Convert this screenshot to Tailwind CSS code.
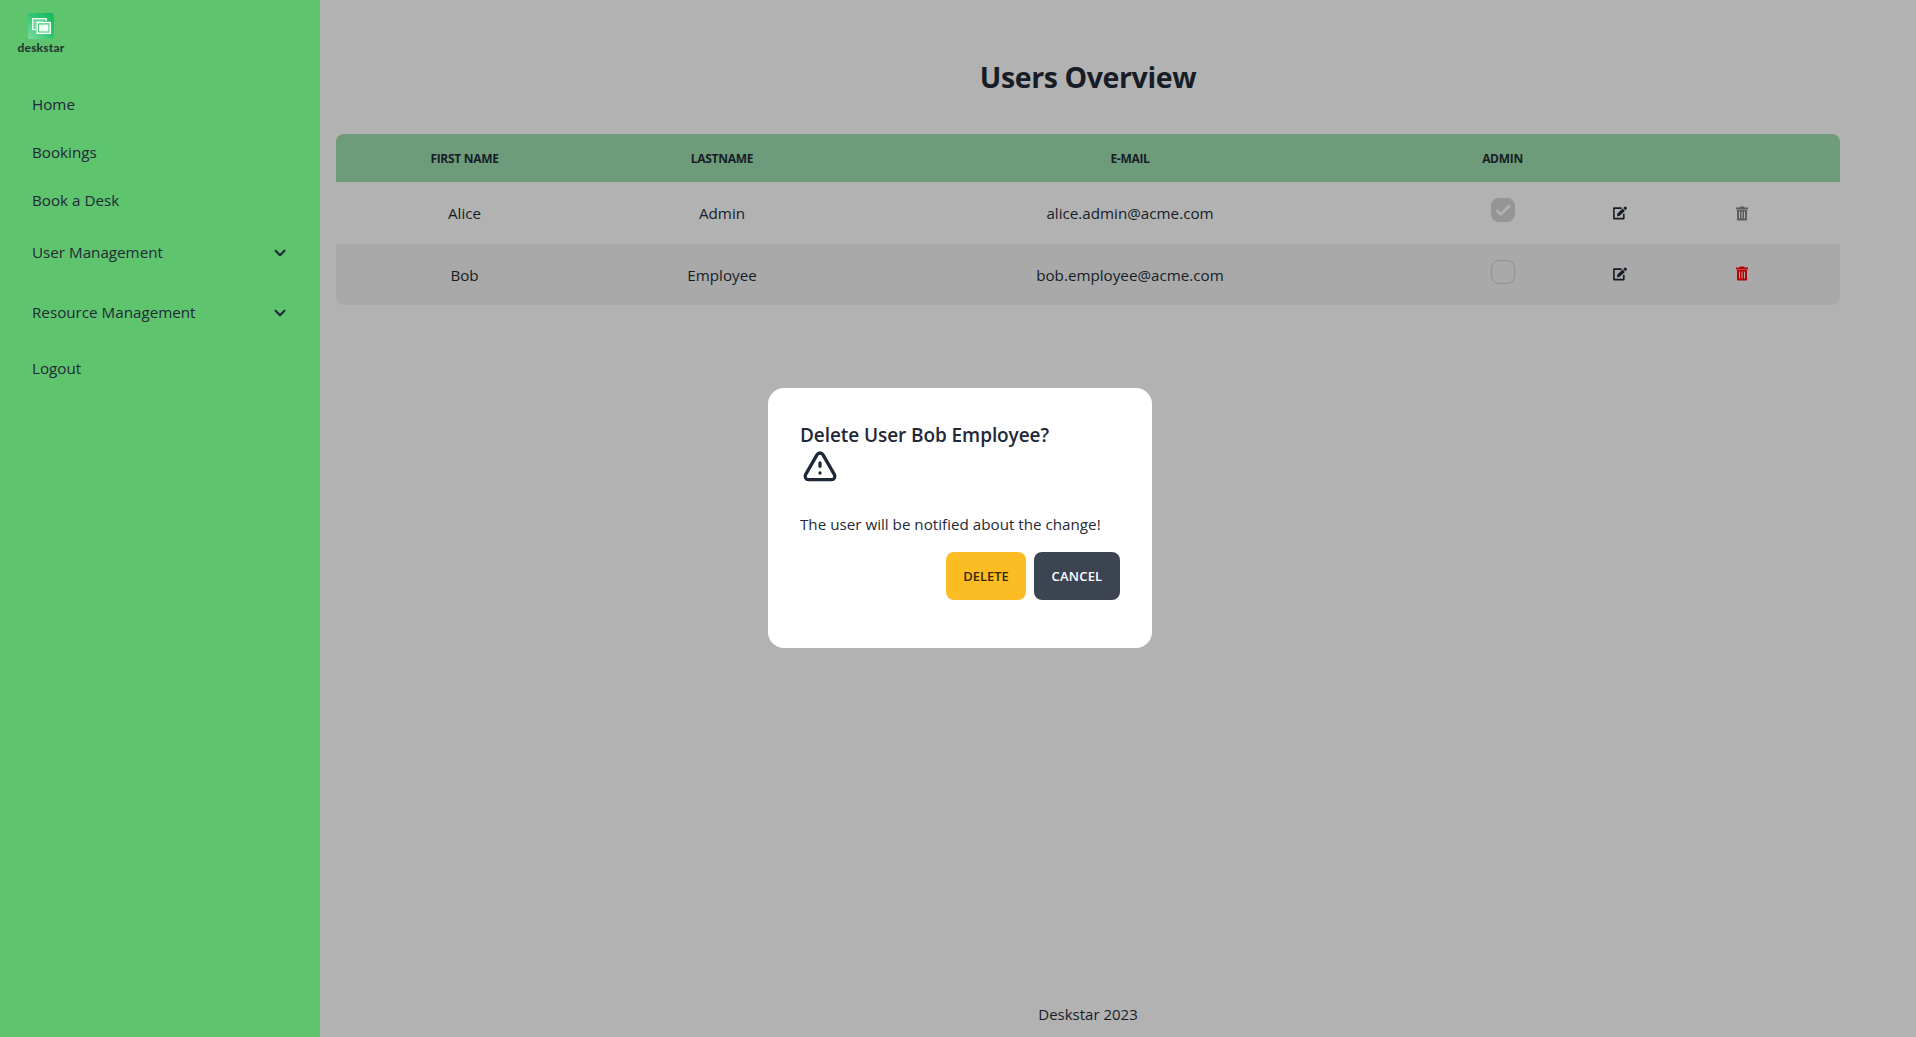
<!DOCTYPE html>
<html lang="en">
<head>
<meta charset="utf-8">
<title>Deskstar</title>
<script src="https://cdn.jsdelivr.net/npm/@tailwindcss/browser@4"></script>
</head>
<body class="h-screen overflow-hidden bg-[#b2b2b2] font-['Open_Sans','Noto_Sans',sans-serif] text-[15.2px] leading-6 text-[#1f2937]">
<svg class="hidden">
  <symbol id="edit" viewBox="0 0 14 14"><path d="M8.6 2.1H.9v10.5h9.9V7.8" fill="none" stroke="currentColor" stroke-width="1.6" stroke-linejoin="round"/><path d="M4.4 7.6l5.2-5 2.3 2.3-5.2 4.9-2.7.6zM10.2 2l1.4-1.3q.6-.5 1.2 0l.9.9q.5.6 0 1.2l-1.2 1.4z" fill="currentColor"/></symbol>
  <symbol id="trash" viewBox="0 0 12 15"><path d="M0 1.5h3.7V.6h4.6v.9H12v1.9H0z" fill="currentColor"/><path d="M1 4h10v9.500q0 .9-.9.9H1.900q-.9 0-.9-.9zM3 5.400v7.200h1V5.400zm2.500 0v7.200h1V5.400zm2.500 0v7.200h1V5.400z" fill="currentColor" fill-rule="evenodd"/></symbol>
  <symbol id="chevron" viewBox="0 0 20 20"><path fill="currentColor" fill-rule="evenodd" d="M5.293 7.293a1 1 0 011.414 0L10 10.586l3.293-3.293a1 1 0 111.414 1.414l-4 4a1 1 0 01-1.414 0l-4-4a1 1 0 010-1.414z"/></symbol>
</svg>
<div class="flex h-full">
  <aside class="flex h-full w-80 shrink-0 flex-col bg-[#5fc46e]">
    <div class="flex h-20 w-[82px] flex-col items-center pt-[13px]">
      <svg class="h-[26px] w-[26px] shrink-0" viewBox="0 0 26 26">
        <defs><linearGradient id="lg" x1="0" y1="1" x2="1" y2="0"><stop offset="0" stop-color="#7fdca0"/><stop offset=".5" stop-color="#35c675"/><stop offset="1" stop-color="#12b85c"/></linearGradient></defs>
        <rect width="26" height="26" rx="2" fill="url(#lg)"/>
        <path d="M8 16.500H4.700V5.700h13.500V8" fill="none" stroke="#eafbf0" stroke-width="1.500"/>
        <path d="M8 14H7V8h9" fill="none" stroke="#b9efcd" stroke-width="1"/>
        <rect x="9.200" y="9.500" width="13" height="10.800" fill="#43c97c" stroke="#fff" stroke-width="1.500"/>
        <rect x="11" y="11.500" width="9.500" height="7" fill="#f2fdf6"/>
      </svg>
      <span class="font-['Lato',sans-serif] text-[12px] leading-[18px] font-black tracking-[0.15px] text-[#263a30]">deskstar</span>
    </div>
    <nav class="flex flex-col px-8">
      <a class="flex h-12 items-center">Home</a>
      <a class="flex h-12 items-center">Bookings</a>
      <a class="flex h-12 items-center">Book a Desk</a>
      <a class="flex h-[58px] items-center justify-between"><span class="pb-0.5">User Management</span><svg class="-mr-[3px] size-[22px]"><use href="#chevron"/></svg></a>
      <a class="flex h-[62px] items-center justify-between"><span class="pb-0.5">Resource Management</span><svg class="-mr-[3px] size-[22px]"><use href="#chevron"/></svg></a>
      <a class="flex h-12 items-center">Logout</a>
    </nav>
  </aside>
  <main class="flex h-full w-[1536px] flex-col px-4 text-[#161d27]">
    <h1 class="mt-[57px] mb-[37px] text-center text-[28.5px] leading-10 font-bold tracking-[-0.4px]">Users Overview</h1>
    <div class="overflow-hidden rounded-lg text-center">
      <div class="grid h-12 grid-cols-[257px_258px_558px_187px_48px_196px] items-center bg-[#6e9b7a] pt-px text-[12px] font-bold tracking-[-0.3px]">
        <span>FIRST NAME</span><span>LASTNAME</span><span>E-MAIL</span><span>ADMIN</span>
      </div>
      <div class="grid h-[62px] grid-cols-[257px_258px_558px_187px_48px_196px] items-center justify-items-center">
        <span>Alice</span><span>Admin</span><span>alice.admin@acme.com</span>
        <span class="mb-1.5 flex size-6 items-center justify-center rounded-lg bg-[#939597]"><svg class="size-6" viewBox="0 0 24 24"><path d="M5.500 12.200l4.300 4.200 9-9" fill="none" stroke="#b2b2b2" stroke-width="2.800"/></svg></span>
        <svg class="size-3.5 text-[#161d27]"><use href="#edit"/></svg>
        <svg class="h-[15px] w-3 text-[#5c5c5c]"><use href="#trash"/></svg>
      </div>
      <div class="grid h-[61px] grid-cols-[257px_258px_558px_187px_48px_196px] items-center justify-items-center bg-[#a9a9a9]">
        <span>Bob</span><span>Employee</span><span>bob.employee@acme.com</span>
        <span class="mb-[5px] size-6 rounded-lg border border-[#8f9091]"></span>
        <svg class="mb-0.5 size-3.5 text-[#161d27]"><use href="#edit"/></svg>
        <svg class="mb-0.5 h-[15px] w-3 text-[#b90000]"><use href="#trash"/></svg>
      </div>
    </div>
    <footer class="mt-auto pb-[11px] text-center text-[15px]">Deskstar 2023</footer>
  </main>
</div>
<div class="fixed inset-0 flex items-center justify-center pb-px pl-1">
  <div class="flex h-[260px] w-96 flex-col rounded-2xl bg-white px-8 pt-[33px]">
    <h2 class="text-[19px] leading-7 font-semibold tracking-[-0.08px]">Delete User Bob Employee?</h2>
    <svg class="-mt-px size-10 shrink-0" viewBox="0 0 24 24" fill="none" stroke="currentColor" stroke-width="2" stroke-linecap="round" stroke-linejoin="round"><path d="M12 9v2m0 4h.01m-6.938 4h13.856c1.540 0 2.502-1.667 1.732-3L13.732 4c-.77-1.333-2.694-1.333-3.464 0L3.340 16c-.77 1.333.192 3 1.732 3z"/></svg>
    <p class="mt-6 whitespace-nowrap">The user will be notified about the change!</p>
    <div class="mt-4 flex justify-end gap-2 text-[13px] font-semibold">
      <button class="h-12 w-20 rounded-lg bg-[#fbbd23] text-[#382800]">DELETE</button>
      <button class="h-12 w-[86px] rounded-lg bg-[#3d4451] tracking-[0.2px] text-white">CANCEL</button>
    </div>
  </div>
</div>
</body>
</html>
